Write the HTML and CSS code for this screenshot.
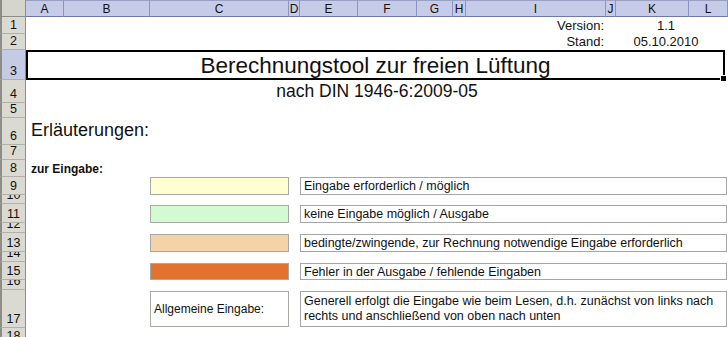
FILE: index.html
```html
<!DOCTYPE html>
<html lang="de">
<head>
  <meta charset="UTF-8" />
  <meta name="viewport" content="width=device-width, initial-scale=1.0"/>
  <title>Berechnungstool zur freien Lüftung</title>
  <link rel="stylesheet" href="styles.css">
</head>
<body>
  <div class="sheet">
    <div class="corner"></div>
    <div class="col">A</div>
    <div class="col">B</div>
    <div class="col">C</div>
    <div class="col">D</div>
    <div class="col">E</div>
    <div class="col">F</div>
    <div class="col">G</div>
    <div class="col">H</div>
    <div class="col">I</div>
    <div class="col">J</div>
    <div class="col">K</div>
    <div class="col">L</div>

    <div class="rh r1">1</div>
    <div class="rh r2">2</div>
    <div class="rh r3 sel">3</div>
    <div class="rh r4">4</div>
    <div class="rh r5">5</div>
    <div class="rh r6">6</div>
    <div class="rh r7">7</div>
    <div class="rh r8">8</div>
    <div class="rh r9">9</div>
    <div class="rh r10">10</div>
    <div class="rh r11">11</div>
    <div class="rh r12">12</div>
    <div class="rh r13">13</div>
    <div class="rh r14">14</div>
    <div class="rh r15">15</div>
    <div class="rh r16">16</div>
    <div class="rh r17">17</div>
    <div class="rh r18">18</div>

    <!-- Kopf -->
    <div class="meta-label r1">Version:</div>
    <div class="meta-value r1">1.1</div>
    <div class="meta-label r2">Stand:</div>
    <div class="meta-value r2">05.10.2010</div>

    <div class="title r3">Berechnungstool zur freien Lüftung</div>
    <div class="subtitle r4">nach DIN 1946-6:2009-05</div>

    <div class="heading r6">Erläuterungen:</div>
    <div class="subheading r8">zur Eingabe:</div>

    <!-- Farblegende -->
    <div class="swatch yellow r9"></div>
    <div class="note r9">Eingabe erforderlich / möglich</div>

    <div class="swatch green r11"></div>
    <div class="note r11">keine Eingabe möglich / Ausgabe</div>

    <div class="swatch peach r13"></div>
    <div class="note r13">bedingte/zwingende, zur Rechnung notwendige Eingabe erforderlich</div>

    <div class="swatch orange r15"></div>
    <div class="note r15">Fehler in der Ausgabe / fehlende Eingaben</div>

    <div class="swatch plain r17">Allgemeine Eingabe:</div>
    <div class="note multi r17">Generell erfolgt die Eingabe wie beim Lesen, d.h. zunächst von links nach<br>rechts und anschließend von oben nach unten</div>
  </div>
</body>
</html>
```

FILE: styles.css
```css
* {
  box-sizing: border-box;
}

body {
  margin: 0;
  font-family: "Liberation Sans", Arial, sans-serif;
  background: #ffffff;
  color: #111;
}

.sheet {
  display: grid;
  grid-template-columns: 26px 38px 86px 139px 11px 58px 59px 36px 13px 140px 10px 73px 39px;
  grid-template-rows: 17px 17px 16px 30px 23px 15px 27px 15px 17px 18px 9px 19px 10px 19px 10px 18px 10px 38px 17px;
  width: 728px;
  height: 337px;
  overflow: hidden;
}

/* Kopfzeilen */
.corner {
  grid-row: 1;
  grid-column: 1;
  background: #d6d5cd;
  border-left: 2px solid #8d8d88;
  border-right: 1px solid #8d8d88;
  border-bottom: 1px solid #8d8d88;
}

.col {
  grid-row: 1;
  background: #c6cce7;
  border-top: 1px solid #9aa0c4;
  border-right: 1px solid #8c94c4;
  border-bottom: 1px solid #6f77a6;
  font-size: 12px;
  display: flex;
  align-items: center;
  justify-content: center;
  overflow: hidden;
}

.rh {
  grid-column: 1;
  background: #dbdad2;
  border-left: 2px solid #8d8d88;
  border-right: 1px solid #8d8d88;
  border-bottom: 1px solid #b2b1a8;
  font-size: 12.5px;
  line-height: 14px;
  display: flex;
  align-items: flex-end;
  justify-content: center;
  padding-bottom: 1px;
  overflow: hidden;
}

.rh.sel {
  background: #c5cbe4;
}

.r1 { grid-row: 2; }
.r2 { grid-row: 3; }
.r3 { grid-row: 4; }
.r4 { grid-row: 5; }
.r5 { grid-row: 6; }
.r6 { grid-row: 7; }
.r7 { grid-row: 8; }
.r8 { grid-row: 9; }
.r9 { grid-row: 10; }
.r10 { grid-row: 11; }
.r11 { grid-row: 12; }
.r12 { grid-row: 13; }
.r13 { grid-row: 14; }
.r14 { grid-row: 15; }
.r15 { grid-row: 16; }
.r16 { grid-row: 17; }
.r17 { grid-row: 18; }
.r18 { grid-row: 19; }

/* Version / Stand */
.meta-label {
  grid-column: 10;
  justify-self: end;
  align-self: end;
  font-size: 13px;
  line-height: 15px;
  padding-right: 2px;
  padding-bottom: 1px;
}

.meta-value {
  grid-column: 12 / 14;
  align-self: end;
  text-align: center;
  font-size: 13px;
  line-height: 15px;
  padding-right: 12px;
  padding-bottom: 1px;
}

.title {
  grid-column: 2 / 14;
  margin-right: 3px;
  border: 2px solid #000;
  font-size: 22.5px;
  display: flex;
  align-items: center;
  justify-content: center;
  padding-top: 1px;
  position: relative;
}

.title::after {
  content: "";
  position: absolute;
  right: -4px;
  bottom: -4px;
  width: 5px;
  height: 5px;
  background: #000;
  border: 1px solid #fff;
}

.subtitle {
  grid-column: 2 / 14;
  align-self: end;
  text-align: center;
  font-size: 17.5px;
  line-height: 20px;
  padding-bottom: 2px;
}

.heading {
  grid-column: 2 / 14;
  align-self: end;
  font-size: 18px;
  line-height: 21px;
  padding-left: 5px;
  padding-bottom: 4px;
}

.subheading {
  grid-column: 2 / 14;
  align-self: end;
  font-size: 12px;
  font-weight: bold;
  line-height: 14px;
  padding-left: 5px;
  padding-bottom: 1px;
}

/* Legende */
.swatch {
  grid-column: 4;
  border: 1px solid #a9a9a4;
}

.r11.swatch, .r13.swatch, .r15.swatch,
.r11.note, .r13.note, .r15.note {
  margin-top: 1px;
}

.yellow { background: #ffffd1; }
.green { background: #d2fbd2; }
.peach { background: #f4d3a8; }
.orange { background: #e1732f; }

.plain {
  margin: 1px 0;
  font-size: 12px;
  display: flex;
  align-items: center;
  padding-left: 3px;
}

.note {
  grid-column: 6 / 14;
  margin-right: 1px;
  border: 1px solid #a6a6a6;
  font-size: 12.5px;
  line-height: 16px;
  padding-left: 3px;
  display: flex;
  align-items: center;
  white-space: nowrap;
  overflow: hidden;
}

.note.multi {
  display: block;
  margin: 1px 1px 1px 0;
  line-height: 15px;
  padding-top: 2px;
}
```
